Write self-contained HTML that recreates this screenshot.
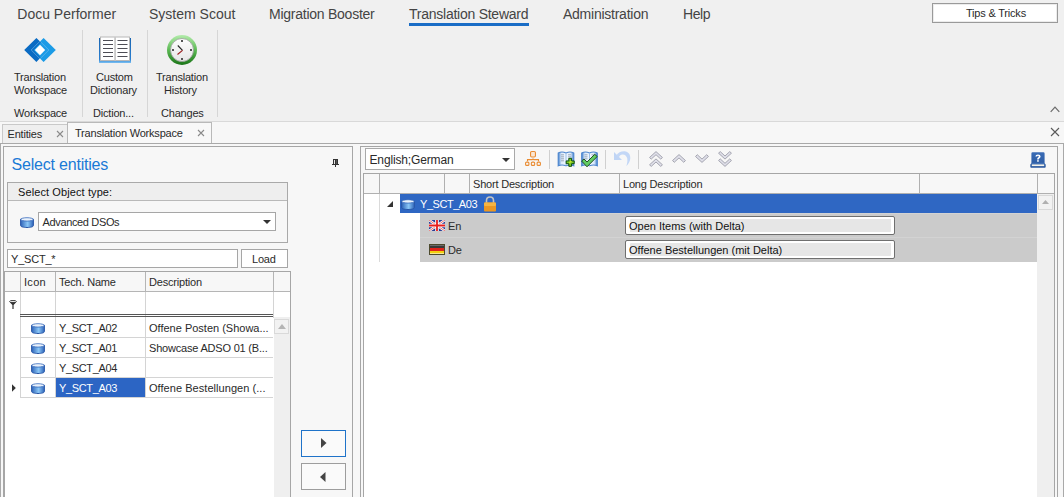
<!DOCTYPE html>
<html><head><meta charset="utf-8">
<style>
*{box-sizing:border-box;margin:0;padding:0}
html,body{width:1064px;height:497px;overflow:hidden;background:#f0f0f0;font-family:"Liberation Sans",sans-serif;color:#333;position:relative}
.a{position:absolute}
.t{position:absolute;white-space:nowrap;line-height:1}
.m{font-size:14px;color:#444}
.s{font-size:11px;color:#2a2a2a;letter-spacing:-0.2px}
.vs{position:absolute;width:1px;background:#d6d6d6}
</style></head><body>
<svg width="0" height="0" style="position:absolute"><defs>
<linearGradient id="dbg" x1="0" y1="0" x2="1" y2="0"><stop offset="0" stop-color="#2f64b8"/><stop offset="0.55" stop-color="#8ac6f6"/><stop offset="1" stop-color="#2f64b8"/></linearGradient>
</defs></svg>


<!-- top menu -->
<div class="t m" style="left:17.3px;top:7px">Docu Performer</div>
<div class="t m" style="left:149px;top:7px">System Scout</div>
<div class="t m" style="left:269px;top:7px;letter-spacing:-0.25px">Migration Booster</div>
<div class="t m" style="left:409px;top:7px;letter-spacing:-0.25px">Translation Steward</div>
<div class="a" style="left:409px;top:23px;width:120px;height:3px;background:#1a6dc6"></div>
<div class="t m" style="left:563px;top:7px;letter-spacing:-0.25px">Administration</div>
<div class="t m" style="left:683px;top:7px;letter-spacing:-0.4px">Help</div>

<div class="a" style="left:932px;top:3px;width:126px;height:20px;background:#fff;border:1px solid #9a9a9a;box-shadow:inset 0 0 0 1px #ececec"></div>
<div class="t s" style="left:966px;top:8px">Tips &amp; Tricks</div>

<!-- ribbon -->
<div class="vs" style="left:82px;top:30px;height:87px"></div>
<div class="vs" style="left:147px;top:30px;height:87px"></div>
<div class="vs" style="left:217px;top:30px;height:87px"></div>

<div class="t s" style="left:14px;top:72px">Translation</div>
<div class="t s" style="left:14px;top:85px">Workspace</div>
<div class="t s" style="left:14px;top:108px">Workspace</div>
<div class="t s" style="left:96px;top:72px">Custom</div>
<div class="t s" style="left:90px;top:85px">Dictionary</div>
<div class="t s" style="left:93px;top:108px">Diction...</div>
<div class="t s" style="left:156px;top:72px">Translation</div>
<div class="t s" style="left:164px;top:85px">History</div>
<div class="t s" style="left:161px;top:108px">Changes</div>


<!-- ribbon icons -->
<svg class="a" style="left:22px;top:36px" width="36" height="28" viewBox="22 36 36 28">
<path d="M43.6 38L55.8 50L43.6 62L31.4 50z" fill="#1b9be6"/>
<path d="M36.4 38L41 42.5L33.6 50L40.6 57.5L36.4 62L24.2 50z" fill="#0a6bc3"/>
<path d="M40 41.2L48.8 50L40 58.8L31.2 50z" fill="none" stroke="#7cc2ef" stroke-width="0.7" opacity="0.8"/>
<path d="M40 44.8L45.2 50L40 55.2L34.8 50z" fill="#fff"/>
</svg>
<svg class="a" style="left:98px;top:36px" width="34" height="28" viewBox="98 36 34 28">
<defs><linearGradient id="bc" x1="0" y1="0" x2="0" y2="1"><stop offset="0" stop-color="#1a66b2"/><stop offset="0.85" stop-color="#2a7fd0"/><stop offset="1" stop-color="#7cc0f2"/></linearGradient></defs>
<rect x="99" y="38" width="32" height="25" fill="url(#bc)"/>
<rect x="100.5" y="37" width="29" height="23.5" fill="#fff" stroke="#b8b8b8" stroke-width="1"/>
<rect x="114.2" y="37" width="1.8" height="23.5" fill="#c9c9c9"/>
<path d="M103 40.5h10M103 44.5h10M103 48.5h10M103 52.5h10M103 56.5h10M117.5 40.5h10M117.5 44.5h10M117.5 48.5h10M117.5 52.5h10M117.5 56.5h10" stroke="#4d4d55" stroke-width="1"/>
</svg>
<svg class="a" style="left:166px;top:34px" width="32" height="32" viewBox="166 34 32 32">
<defs><linearGradient id="gc" x1="0" y1="0" x2="0" y2="1"><stop offset="0" stop-color="#b4ecac"/><stop offset="0.5" stop-color="#5cb954"/><stop offset="1" stop-color="#1a7418"/></linearGradient>
<linearGradient id="fc" x1="0" y1="0" x2="0" y2="1"><stop offset="0" stop-color="#fdfdfd"/><stop offset="1" stop-color="#e6e6e6"/></linearGradient></defs>
<circle cx="182" cy="50" r="15" fill="url(#gc)"/>
<circle cx="182" cy="50" r="11.5" fill="url(#fc)" stroke="#9a9a9a" stroke-width="0.8"/>
<rect x="181" y="40" width="2" height="2" fill="#555"/><rect x="181" y="58" width="2" height="2" fill="#555"/>
<rect x="172" y="49" width="2" height="2" fill="#555"/><rect x="190" y="49" width="2" height="2" fill="#555"/>
<path d="M182.5 50.3L177.8 45.5" stroke="#222" stroke-width="1.1"/>
<path d="M182.5 50.3L177.5 54.5" stroke="#9a1a1a" stroke-width="1.1"/>
</svg>
<svg class="a" style="left:1050px;top:105px" width="10" height="8"><path d="M0.7 6.8L5 2.2L9.3 6.8" fill="none" stroke="#6a6a6a" stroke-width="1.2"/></svg>

<!-- ribbon bottom / tab strip -->
<div class="a" style="left:0;top:121px;width:1064px;height:1px;background:#d9d9d9"></div>
<div class="a" style="left:0;top:122px;width:1064px;height:22px;background:#f7f7f7"></div>
<div class="a" style="left:2px;top:124px;width:66px;height:20px;background:#efefef;border:1px solid #c9c9c9;border-bottom:none"></div>
<div class="t s" style="left:7.5px;top:129px">Entities</div>
<div class="a" style="left:67px;top:122px;width:145px;height:23px;background:#f8f8f8;border:1px solid #b9b9b9;border-bottom:none"></div>
<div class="t s" style="left:75px;top:128px">Translation Workspace</div>

<svg class="a" style="left:56px;top:130px" width="8" height="8"><path d="M1 1L7 7M7 1L1 7" stroke="#8a8a8a" stroke-width="1.1"/></svg>
<svg class="a" style="left:197px;top:129px" width="8" height="8"><path d="M1 1L7 7M7 1L1 7" stroke="#8a8a8a" stroke-width="1.1"/></svg>
<svg class="a" style="left:1050px;top:127px" width="10" height="10"><path d="M1 1L9 9M9 1L1 9" stroke="#5a5a5a" stroke-width="1.1"/></svg>
<!-- content -->
<div class="a" style="left:0;top:143px;width:1064px;height:354px;background:#f7f7f7;border-top:1px solid #a9a9a9;border-left:1px solid #a9a9a9;border-right:1px solid #a9a9a9"></div>
<!-- left panel -->
<div class="a" style="left:3px;top:146px;width:350px;height:360px;border:1px solid #a6a6a6;background:#f7f7f7"></div>
<div class="t" style="left:11.5px;top:157px;font-size:16px;color:#1a7ad6;letter-spacing:-0.2px">Select entities</div>
<svg class="a" style="left:332px;top:159px" width="8" height="9" viewBox="0 0 8 9" shape-rendering="crispEdges"><rect x="1" y="0" width="5" height="5" fill="#333"/><rect x="2" y="1" width="1" height="4" fill="#e6e6e6"/><rect x="4" y="1" width="1" height="4" fill="#555"/><rect x="0" y="5" width="7" height="1" fill="#333"/><rect x="3" y="6" width="1" height="2" fill="#333"/></svg>

<div class="a" style="left:7px;top:182px;width:281px;height:61px;border:1px solid #a9a9a9;background:#f7f7f7"></div>
<div class="a" style="left:8px;top:183px;width:279px;height:18px;background:#eeeeee;border-bottom:1px solid #b9b9b9"></div>
<div class="t s" style="left:18px;top:187px;color:#111;letter-spacing:0.1px">Select Object type:</div>
<svg class="a" style="left:20px;top:217px" width="14" height="11" viewBox="0 0 14 11"><path d="M0.6 2.2V8.6C0.6 9.8 3.5 10.5 7 10.5S13.4 9.8 13.4 8.6V2.2z" fill="url(#dbg)" stroke="#2957a8" stroke-width="1"/><ellipse cx="7" cy="2.4" rx="6.2" ry="1.7" fill="#e9f1fb" stroke="#3a6cbc" stroke-width="0.8"/></svg>
<div class="a" style="left:38px;top:212px;width:238px;height:19px;background:#fff;border:1px solid #a6a6a6"></div>
<div class="t s" style="left:42.5px;top:217px;letter-spacing:-0.35px">Advanced DSOs</div>
<svg class="a" style="left:263px;top:220px" width="8" height="4"><path d="M0 0h8L4 4z" fill="#333"/></svg>

<div class="a" style="left:7px;top:249px;width:231px;height:19px;background:#fff;border:1px solid #a6a6a6"></div>
<div class="t s" style="left:11px;top:254px">Y_SCT_*</div>
<div class="a" style="left:241px;top:249px;width:47px;height:19px;background:#fff;border:1px solid #a6a6a6"></div>
<div class="t s" style="left:252px;top:254px">Load</div>

<!-- left grid -->
<div class="a" style="left:4px;top:271px;width:287px;height:240px;background:#fff;border:1px solid #a6a6a6"></div>
<div class="a" style="left:5px;top:272px;width:285px;height:20px;background:#f7f7f7;border-bottom:1px solid #b5b5b5"></div>
<div class="a" style="left:20px;top:272px;width:1px;height:19px;background:#b5b5b5"></div><div class="a" style="left:20px;top:292px;width:1px;height:106px;background:#d4d4d4"></div>
<div class="a" style="left:55px;top:272px;width:1px;height:19px;background:#b5b5b5"></div><div class="a" style="left:55px;top:292px;width:1px;height:106px;background:#d4d4d4"></div>
<div class="a" style="left:145px;top:272px;width:1px;height:19px;background:#b5b5b5"></div><div class="a" style="left:145px;top:292px;width:1px;height:106px;background:#d4d4d4"></div>
<div class="a" style="left:273px;top:272px;width:1px;height:19px;background:#b5b5b5"></div><div class="a" style="left:273px;top:292px;width:1px;height:26px;background:#d4d4d4"></div>
<div class="t s" style="left:24px;top:277px;letter-spacing:0.3px">Icon</div>
<div class="t s" style="left:59px;top:277px">Tech. Name</div>
<div class="t s" style="left:149px;top:277px">Description</div>


<!-- filter row -->
<svg class="a" style="left:9px;top:300px" width="8" height="9" viewBox="0 0 8 9"><ellipse cx="4" cy="1.6" rx="3.4" ry="1.2" fill="#e8e8e8" stroke="#333" stroke-width="0.9"/><path d="M0.8 2.2L3.4 5V9H4.6V5L7.2 2.2z" fill="#333"/></svg>
<div class="a" style="left:20px;top:314px;width:253px;height:1px;background:#555"></div>
<div class="a" style="left:20px;top:316px;width:253px;height:1px;background:#555"></div>
<div class="a" style="left:274px;top:317px;width:16px;height:200px;background:#efefef"></div>
<div class="a" style="left:274px;top:319px;width:15px;height:15px;background:#f2f2f2;border:1px solid #d9d9d9"></div>
<svg class="a" style="left:277.5px;top:324px" width="8" height="5"><path d="M4 0L8 5H0z" fill="#b5b5b5"/></svg>
<div class="a" style="left:20px;top:337px;width:253px;height:1px;background:#d4d4d4"></div><svg class="a" style="left:31px;top:323px" width="14" height="11" viewBox="0 0 14 11"><path d="M0.6 2.2V8.6C0.6 9.8 3.5 10.5 7 10.5S13.4 9.8 13.4 8.6V2.2z" fill="url(#dbg)" stroke="#2957a8" stroke-width="1"/><ellipse cx="7" cy="2.4" rx="6.2" ry="1.7" fill="#e9f1fb" stroke="#3a6cbc" stroke-width="0.8"/></svg><div class="t s" style="left:59px;top:323px;color:#2a2a2a;letter-spacing:-0.35px">Y_SCT_A02</div><div class="t s" style="left:149px;top:323px;letter-spacing:0">Offene Posten (Showa...</div><div class="a" style="left:20px;top:357px;width:253px;height:1px;background:#d4d4d4"></div><svg class="a" style="left:31px;top:343px" width="14" height="11" viewBox="0 0 14 11"><path d="M0.6 2.2V8.6C0.6 9.8 3.5 10.5 7 10.5S13.4 9.8 13.4 8.6V2.2z" fill="url(#dbg)" stroke="#2957a8" stroke-width="1"/><ellipse cx="7" cy="2.4" rx="6.2" ry="1.7" fill="#e9f1fb" stroke="#3a6cbc" stroke-width="0.8"/></svg><div class="t s" style="left:59px;top:343px;color:#2a2a2a;letter-spacing:-0.35px">Y_SCT_A01</div><div class="t s" style="left:149px;top:343px">Showcase ADSO 01 (B...</div><div class="a" style="left:20px;top:377px;width:253px;height:1px;background:#d4d4d4"></div><svg class="a" style="left:31px;top:363px" width="14" height="11" viewBox="0 0 14 11"><path d="M0.6 2.2V8.6C0.6 9.8 3.5 10.5 7 10.5S13.4 9.8 13.4 8.6V2.2z" fill="url(#dbg)" stroke="#2957a8" stroke-width="1"/><ellipse cx="7" cy="2.4" rx="6.2" ry="1.7" fill="#e9f1fb" stroke="#3a6cbc" stroke-width="0.8"/></svg><div class="t s" style="left:59px;top:363px;color:#2a2a2a;letter-spacing:-0.35px">Y_SCT_A04</div><div class="a" style="left:56px;top:378px;width:89px;height:19px;background:#2c65c4"></div><div class="a" style="left:20px;top:397px;width:253px;height:1px;background:#d4d4d4"></div><svg class="a" style="left:31px;top:383px" width="14" height="11" viewBox="0 0 14 11"><path d="M0.6 2.2V8.6C0.6 9.8 3.5 10.5 7 10.5S13.4 9.8 13.4 8.6V2.2z" fill="url(#dbg)" stroke="#2957a8" stroke-width="1"/><ellipse cx="7" cy="2.4" rx="6.2" ry="1.7" fill="#e9f1fb" stroke="#3a6cbc" stroke-width="0.8"/></svg><div class="t s" style="left:59px;top:383px;color:#fff;letter-spacing:-0.35px">Y_SCT_A03</div><div class="t s" style="left:149px;top:383px;letter-spacing:0.05px">Offene Bestellungen (...</div><svg class="a" style="left:12px;top:384px" width="4" height="8"><path d="M0 0.3l3.8 3.7L0 7.7z" fill="#333"/></svg>
<!-- move buttons -->
<div class="a" style="left:301px;top:430px;width:45px;height:27px;background:#fafafa;border:1px solid #1f73c9"></div>
<svg class="a" style="left:321px;top:438px" width="6" height="10"><path d="M0 0l5.5 5L0 10z" fill="#444"/></svg>
<div class="a" style="left:301px;top:463px;width:45px;height:27px;background:#fafafa;border:1px solid #9d9d9d"></div>
<svg class="a" style="left:320px;top:472px" width="6" height="10"><path d="M5.5 0L0 5l5.5 5z" fill="#444"/></svg>

<!-- right panel -->
<div class="a" style="left:360px;top:146px;width:698px;height:360px;border:1px solid #a6a6a6;background:#f7f7f7"></div>
<div class="a" style="left:365px;top:148px;width:150px;height:22px;background:#fff;border:1px solid #a9a9a9"></div>
<div class="t s" style="left:369.5px;top:154px;font-size:12px;letter-spacing:-0.15px">English;German</div>
<svg class="a" style="left:502px;top:158px" width="8" height="4"><path d="M0 0h8L4 4z" fill="#333"/></svg>
<div class="a" style="left:549px;top:150px;width:1px;height:19px;background:#d0d0d0"></div>
<div class="a" style="left:605px;top:150px;width:1px;height:19px;background:#d0d0d0"></div>
<div class="a" style="left:638px;top:150px;width:1px;height:19px;background:#d0d0d0"></div>

<!-- hierarchy icon -->
<svg class="a" style="left:524px;top:150px" width="18" height="17" viewBox="0 0 18 17" fill="none" stroke="#e98c33" stroke-width="1.1">
<rect x="6.55" y="1.55" width="4.9" height="5.4" rx="1.2" fill="#fbe6d2"/>
<path d="M3.5 11.2V9.6H8.2L9 8.9L9.8 9.6H14.5V11.2"/>
<rect x="1.6" y="12.1" width="3.3" height="3.3" rx="1"/><rect x="7.35" y="12.1" width="3.3" height="3.3" rx="1"/><rect x="13.1" y="12.1" width="3.3" height="3.3" rx="1"/>
</svg>
<!-- book plus -->
<svg class="a" style="left:557px;top:151px" width="18" height="16" viewBox="0 0 18 16">
<defs><linearGradient id="bk" x1="0" y1="0" x2="1" y2="0"><stop offset="0" stop-color="#3f7cc9"/><stop offset="0.2" stop-color="#dbeafa"/><stop offset="0.5" stop-color="#f2f8ff"/><stop offset="0.8" stop-color="#dbeafa"/><stop offset="1" stop-color="#3f7cc9"/></linearGradient></defs>
<path d="M1.2 2C3.5 0.8 6.5 0.8 9 2C11.5 0.8 14.5 0.8 16.8 2V14.8C14.5 13.8 11.5 13.8 9 14.8C6.5 13.8 3.5 13.8 1.2 14.8z" fill="url(#bk)" stroke="#4d86cf" stroke-width="1.1"/>
<path d="M9 2.2V14.5" stroke="#8fb5e4" stroke-width="0.9"/>
<path d="M4 3.8h3M4 5.8h3M4 7.8h3M4 9.8h3M11 3.8h3M11 5.8h3" stroke="#8a98ab" stroke-width="0.8"/>
<path d="M11.8 7.3h2.8v2.6h2.6v2.8h-2.6v2.6h-2.8v-2.6h-2.6v-2.8h2.6z" fill="#7cc828" stroke="#0b4c0b" stroke-width="1"/>
<path d="M12.5 12.2L13.3 10.7L14.5 10.7" stroke="#f0f020" stroke-width="1" fill="none"/>
</svg>
<!-- book check -->
<svg class="a" style="left:581px;top:151px" width="18" height="17" viewBox="0 0 18 17">
<path d="M0.7 2C3 0.8 6 0.8 8.5 2C11 0.8 14 0.8 16.3 2V14.8C14 13.8 11 13.8 8.5 14.8C6 13.8 3 13.8 0.7 14.8z" fill="url(#bk)" stroke="#4d86cf" stroke-width="1.1"/>
<path d="M8.5 2.2V14.5" stroke="#8fb5e4" stroke-width="0.9"/>
<path d="M3.5 3.8h3M3.5 5.8h3M3.5 7.8h3M10.5 3.8h3" stroke="#8a98ab" stroke-width="0.8"/>
<path d="M0.6 10L3 8L6 11L13.7 3.3L16.2 5.5L6 15.8z" fill="#62cc62" stroke="#173f17" stroke-width="0.9" stroke-linejoin="round"/>
</svg>
<!-- undo -->
<svg class="a" style="left:613px;top:150px" width="19" height="18" viewBox="0 0 19 18">
<path d="M1 2L1 10L9 10z" fill="#c0d5f5"/>
<path d="M3 5.8C5 2.4 8.5 1 11.5 1.2C15.5 1.6 17.5 4.5 17.3 8.3C17.1 11.5 15.5 14 13.3 16.3C14.2 13.5 14.6 11 14.3 8.8C14 6.2 12 4.3 9.5 4.4C7.8 4.5 6.6 5.5 5.8 7.6z" fill="#c3d7f6"/>
</svg>
<!-- chevrons -->
<svg class="a" style="left:648.5px;top:151px" width="14" height="16" viewBox="0 0 15 16" preserveAspectRatio="none" fill="#e0e0ea" stroke="#9a9ba6" stroke-width="0.9">
<path d="M7.5 0.6L14.4 6.5L12.6 8.1L7.5 3.7L2.4 8.1L0.6 6.5z"/><path d="M7.5 7.9L14.4 13.8L12.6 15.4L7.5 11L2.4 15.4L0.6 13.8z"/>
</svg>
<svg class="a" style="left:671.5px;top:154px" width="14" height="9" viewBox="0 0 15 9" preserveAspectRatio="none" fill="#e0e0ea" stroke="#9a9ba6" stroke-width="0.9">
<path d="M7.5 0.6L14.4 6.5L12.6 8.3L7.5 3.9L2.4 8.3L0.6 6.5z"/>
</svg>
<svg class="a" style="left:694.5px;top:154px" width="14" height="9" viewBox="0 0 15 9" preserveAspectRatio="none" fill="#e0e0ea" stroke="#9a9ba6" stroke-width="0.9">
<path d="M7.5 8.4L14.4 2.5L12.6 0.7L7.5 5.1L2.4 0.7L0.6 2.5z"/>
</svg>
<svg class="a" style="left:717.5px;top:151px" width="14" height="16" viewBox="0 0 15 16" preserveAspectRatio="none" fill="#e0e0ea" stroke="#9a9ba6" stroke-width="0.9">
<path d="M7.5 8.1L14.4 2.2L12.6 0.6L7.5 5L2.4 0.6L0.6 2.2z"/><path d="M7.5 15.4L14.4 9.5L12.6 7.9L7.5 12.3L2.4 7.9L0.6 9.5z"/>
</svg>
<!-- help -->
<svg class="a" style="left:1030px;top:152px" width="16" height="16" viewBox="0 0 16 16">
<defs><linearGradient id="hb" x1="0" y1="0" x2="0" y2="1"><stop offset="0" stop-color="#3a6cb6"/><stop offset="1" stop-color="#2a589f"/></linearGradient></defs>
<path d="M2.6 0.3H13.4Q14.6 0.3 14.6 1.5V11.2L15.7 12.6V14.8Q15.7 15.7 14.8 15.7H1.2Q0.3 15.7 0.3 14.8V12.6L1.4 11.2V1.5Q1.4 0.3 2.6 0.3z" fill="url(#hb)"/>
<path d="M1.6 11.3H14.4" stroke="#5b86c6" stroke-width="0.6"/>
<rect x="1.8" y="12.4" width="12.4" height="1.7" fill="#f5f3ea"/>
<path d="M5.4 4.6Q5.4 2.4 8 2.4Q10.6 2.4 10.6 4.5Q10.6 5.7 9.3 6.4Q8.8 6.7 8.8 7.5H7.1Q7.1 6.2 8 5.6Q8.8 5.1 8.8 4.5Q8.8 3.7 8 3.7Q7.2 3.7 7.1 4.6z" fill="#fff"/>
<rect x="7.1" y="8.2" width="1.7" height="1.5" fill="#fff"/>
</svg>

<!-- right grid -->
<div class="a" style="left:363px;top:173px;width:692px;height:340px;background:#fff;border:1px solid #a6a6a6"></div>
<div class="a" style="left:364px;top:174px;width:690px;height:20px;background:#f7f7f7;border-bottom:1px solid #b0b0b0"></div>
<div class="a" style="left:379px;top:174px;width:1px;height:19px;background:#b0b0b0"></div><div class="a" style="left:379px;top:194px;width:1px;height:68px;background:#dadada"></div>
<div class="a" style="left:444px;top:174px;width:1px;height:19px;background:#b0b0b0"></div>
<div class="a" style="left:469px;top:174px;width:1px;height:19px;background:#b0b0b0"></div>
<div class="a" style="left:619px;top:174px;width:1px;height:19px;background:#b0b0b0"></div>
<div class="a" style="left:919px;top:174px;width:1px;height:19px;background:#b0b0b0"></div>
<div class="a" style="left:1037px;top:174px;width:1px;height:19px;background:#b0b0b0"></div>
<div class="t s" style="left:473px;top:179px">Short Description</div>
<div class="t s" style="left:623px;top:179px">Long Description</div>
<div class="a" style="left:1037px;top:194px;width:17px;height:310px;background:#efefef"></div>
<div class="a" style="left:1038px;top:195px;width:15px;height:15px;background:#f2f2f2;border:1px solid #d9d9d9"></div>
<svg class="a" style="left:1042px;top:200px" width="7" height="4"><path d="M3.5 0L7 4H0z" fill="#b0b0b0"/></svg>

<div class="a" style="left:400px;top:194px;width:637px;height:19px;background:#2f67c3"></div>
<svg class="a" style="left:387px;top:201px" width="6" height="6"><path d="M6 0V6H0z" fill="#333"/></svg>
<svg class="a" style="left:401px;top:199px" width="14" height="11" viewBox="0 0 14 11"><path d="M0.6 2.2V8.6C0.6 9.8 3.5 10.5 7 10.5S13.4 9.8 13.4 8.6V2.2z" fill="url(#dbg)" stroke="#2957a8" stroke-width="1"/><ellipse cx="7" cy="2.4" rx="6.2" ry="1.7" fill="#e9f1fb" stroke="#3a6cbc" stroke-width="0.8"/></svg>
<div class="t s" style="left:420px;top:199px;color:#fff;letter-spacing:-0.45px">Y_SCT_A03</div>
<svg class="a" style="left:483px;top:196px" width="14" height="16" viewBox="0 0 14 16">
<path d="M3.5 7V4.5C3.5 2.3 5 1 7 1S10.5 2.3 10.5 4.5V7" fill="none" stroke="#c3c3c3" stroke-width="1.6"/>
<rect x="1" y="6.5" width="12" height="9" rx="1" fill="#eb9722"/>
<rect x="1" y="6.5" width="12" height="3.5" rx="1" fill="#f6b441"/>
</svg>

<div class="a" style="left:420px;top:213px;width:617px;height:25px;background:#cbcbcb;border-top:1px solid #d3d3d3;border-bottom:1px solid #d3d3d3"></div>
<div class="a" style="left:420px;top:238px;width:617px;height:24px;background:#cbcbcb"></div>
<svg class="a" style="left:429px;top:220px" width="16" height="11" viewBox="0 0 16 11">
<rect width="16" height="11" fill="#2a3f94"/>
<path d="M0 0L16 11M16 0L0 11" stroke="#fff" stroke-width="2.4"/>
<path d="M0 0L16 11M16 0L0 11" stroke="#d33" stroke-width="0.7"/>
<path d="M8 0V11M0 5.5H16" stroke="#fff" stroke-width="3.6"/>
<path d="M8 0V11M0 5.5H16" stroke="#e61e1e" stroke-width="1.8"/>
</svg>
<div class="t s" style="left:448px;top:221px">En</div>
<svg class="a" style="left:429px;top:244px" width="16" height="11" viewBox="0 0 16 11">
<rect x="0" y="0" width="16" height="11" fill="#4d4a2e"/>
<rect x="1" y="1" width="14" height="3" fill="#3a3a3a"/>
<rect x="1" y="1" width="14" height="1" fill="#6b6b6b"/>
<rect x="1" y="4" width="14" height="3" fill="#e0231c"/>
<rect x="1" y="7" width="14" height="3" fill="#f2cf10"/>
<rect x="1" y="9" width="14" height="1" fill="#f7e890"/>
</svg>
<div class="t s" style="left:448px;top:245px">De</div>

<div class="a" style="left:625px;top:216px;width:270px;height:19px;background:#e6e6e6;border:1px solid #6f6f6f;border-radius:2px;box-shadow:inset 4px 2px 0 #fff,inset -3px -2px 0 #fff"></div>
<div class="t s" style="left:629px;top:221px;color:#111;letter-spacing:0">Open Items (with Delta)</div>
<div class="a" style="left:625px;top:240px;width:270px;height:19px;background:#e6e6e6;border:1px solid #6f6f6f;border-radius:2px;box-shadow:inset 4px 2px 0 #fff,inset -3px -2px 0 #fff"></div>
<div class="t s" style="left:629px;top:245px;color:#111;letter-spacing:0">Offene Bestellungen (mit Delta)</div>

</body></html>
